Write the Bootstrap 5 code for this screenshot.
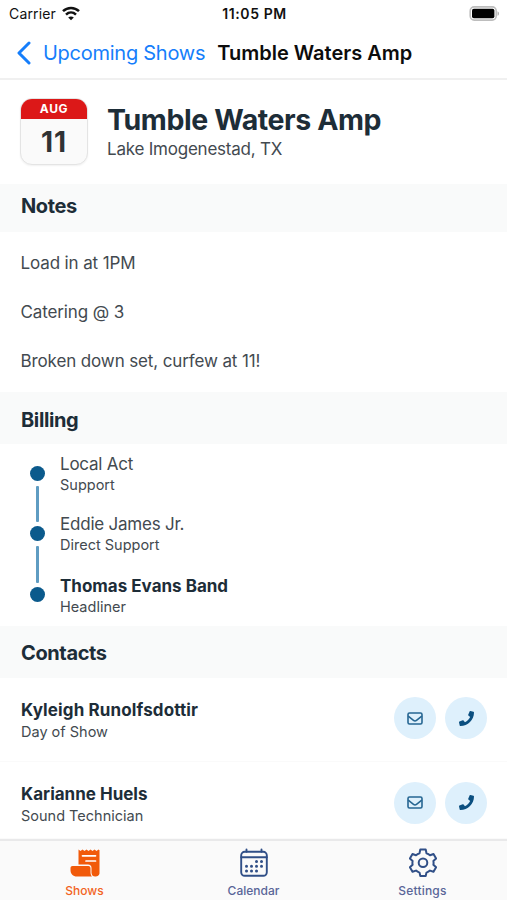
<!DOCTYPE html>
<html lang="en">
<head>
<meta charset="utf-8">
<meta name="viewport" content="width=device-width, initial-scale=1">
<title>Tumble Waters Amp</title>
<link href="https://cdn.jsdelivr.net/npm/bootstrap@5.3.0/dist/css/bootstrap.min.css" rel="stylesheet">
<style>
body{font-family:Inter,"Liberation Sans",sans-serif;color:#434a50;background:#fff;height:900px;overflow:hidden}
.screen{width:507px;height:900px}
.t{white-space:nowrap;display:block}
.status{height:27px;padding:0 7px 0 9px;color:#111;font-size:14px}
.status .side{flex:1 1 0}
.carrier{letter-spacing:.15px;margin-right:6px}
.clock{font-weight:600;font-size:14px;letter-spacing:.6px}
.topnav{height:53px;border-bottom:2px solid #f0f0f0;padding-left:16px}
.back{color:#157efb;font-size:20px;letter-spacing:-.26px;text-decoration:none}
.back svg{margin-right:11px}
.navttl{color:#0c0c0c;font-weight:600;font-size:20px;margin-left:12px}
.event{height:104px;padding:18px 0 0 20px}
.datebox{width:68px;height:67px;border-radius:12px;border:1px solid #e4e4e4;background:#fafafa;box-shadow:0 1px 2px rgba(0,0,0,.06);overflow:hidden}
.mon{height:21px;margin:-1px -1px 0;background:#dc1818;color:#fff;font-size:12px;font-weight:700;line-height:21px;letter-spacing:.6px}
.daynum{font-size:28px;font-weight:700;line-height:46px;color:#303234;letter-spacing:1px}
.einfo{margin:5px 0 0 19px}
.ename{font-size:28.5px;font-weight:700;line-height:34px;color:#1d2d38;letter-spacing:-.42px}
.sect{background:#f9fafa;color:#1d2d38;font-weight:700;font-size:20px;padding:15px 0 0 21px;line-height:24px;letter-spacing:-.38px;height:52px}
.sect-notes{height:48px;padding-top:10px}
.sect-billing{padding-top:16px}
.note{font-size:17px;line-height:24px;margin-bottom:25px;letter-spacing:-.12px}
.notes{height:160px;padding:19px 0 0 20.5px}
.bill{height:182px;padding:8px 0 0 30px}
.rail{width:15px;margin-right:15px;padding-top:14px}
.dot{width:15px;height:15px;border-radius:50%;background:#0b5a8c}
.seg{width:2.5px;height:36px;margin:5px 0 4px;background:#5f9cc2;border-radius:1px}
.seg-b{height:37px}
.act{height:60px}
.nm{font-size:17px;line-height:24px;letter-spacing:-.22px}
.rl{font-size:14.5px;line-height:18px}
.bill .act-top{padding-top:2px}
.strong{font-weight:700;color:#1d2d38;letter-spacing:0}
.contact{height:84px;padding:0 20px 3px 21px;border-bottom:1px solid #fafafa}
.contact .nm{letter-spacing:.13px;margin-top:1px}
.contact .rl{position:relative;top:1px}
.contact-last{height:77px;padding-bottom:0;padding-top:5px}
.contact-last .nm{letter-spacing:0}
.round{width:42px;height:42px;border-radius:50%;background:#def0fc;border:0;padding:0}
.round+.round{margin-left:9px}
.tabs{height:61px;border-top:2px solid #e9e9ea;background:#fafafa;color:#596598}
.tab{font-size:12px;line-height:14px;font-weight:500;padding-top:7px}
.tab svg{margin-bottom:7px}
.wide{letter-spacing:.2px}
.on{color:#f26322}
</style>
</head>
<body>
<div class="screen d-flex flex-column">
  <div class="status d-flex align-items-center flex-shrink-0">
    <div class="side d-flex align-items-center"><span class="t carrier">Carrier</span>
      <svg width="18" height="15" viewBox="0 0 18 15" fill="none" stroke="#111" stroke-width="2.500"><path d="M1 5.200C5.500.8 12.500.8 17 5.200"/><path d="M4 8.600c2.900-2.800 7.100-2.800 10 0"/><path d="M9 14.300 6.200 11.500c1.600-1.500 4-1.500 5.600 0z" fill="#111" stroke="none"/></svg>
    </div>
    <span class="t clock">11:05 PM</span>
    <div class="side d-flex justify-content-end">
      <svg width="31" height="15" viewBox="0 0 31 15"><rect x="1.200" y=".9" width="26" height="13.200" rx="4" fill="#fff" stroke="#bdbdbd" stroke-width="1.600"/><rect x="3" y="2.700" width="22.400" height="9.600" rx="1.800" fill="#000"/><path d="M28.500 5.200c2 .8 2 3.800 0 4.600z" fill="#b0b0b0"/></svg>
    </div>
  </div>
  <nav class="topnav d-flex align-items-center flex-shrink-0">
    <a class="back d-flex align-items-center" href="#"><svg width="16" height="24" viewBox="0 0 16 24" fill="none" stroke="#157efb" stroke-width="3" stroke-linecap="round" stroke-linejoin="round"><path d="M13 2 3 12l10 10"/></svg><span class="t">Upcoming Shows</span></a>
    <span class="t navttl">Tumble Waters Amp</span>
  </nav>
  <header class="event d-flex flex-shrink-0">
    <div class="datebox text-center"><div class="mon">AUG</div><div class="daynum">11</div></div>
    <div class="einfo"><span class="t ename">Tumble Waters Amp</span><span class="t nm">Lake Imogenestad, TX</span></div>
  </header>
  <h2 class="sect sect-notes mb-0 flex-shrink-0">Notes</h2>
  <section class="notes flex-shrink-0">
    <p class="note">Load in at 1PM</p><p class="note">Catering @ 3</p><p class="note mb-0">Broken down set, curfew at 11!</p>
  </section>
  <h2 class="sect sect-billing mb-0 flex-shrink-0">Billing</h2>
  <section class="bill d-flex flex-shrink-0">
    <div class="rail d-flex flex-column align-items-center">
      <i class="dot"></i><i class="seg"></i><i class="dot"></i><i class="seg seg-b"></i><i class="dot"></i>
    </div>
    <div>
      <div class="act"><span class="t nm">Local Act</span><span class="t rl">Support</span></div>
      <div class="act"><span class="t nm">Eddie James Jr.</span><span class="t rl">Direct Support</span></div>
      <div class="act-top"><span class="t nm strong">Thomas Evans Band</span><span class="t rl">Headliner</span></div>
    </div>
  </section>
  <h2 class="sect mb-0 flex-shrink-0">Contacts</h2>
  <div class="contact d-flex align-items-center flex-shrink-0">
    <div class="me-auto"><span class="t nm strong">Kyleigh Runolfsdottir</span><span class="t rl">Day of Show</span></div>
    <button class="round d-flex align-items-center justify-content-center" aria-label="Email"><svg width="16" height="13" viewBox="0 0 16 13" fill="none" stroke="#266692" stroke-width="1.600"><rect x="1" y="1" width="14" height="11" rx="1.500"/><path d="m1.200 4.200 5.300 4.200c1 .8 2 .8 3 0l5.300-4.200"/></svg></button>
    <button class="round d-flex align-items-center justify-content-center" aria-label="Call"><svg width="15" height="15" viewBox="0 0 512 512" fill="#0b4f80"><path d="M493.400 24.600l-104-24c-11.300-2.600-22.900 3.300-27.500 13.900l-48 112c-4.200 9.800-1.400 21.300 6.900 28l60.600 49.600c-36 76.700-98.900 140.500-177.200 177.200l-49.600-60.600c-6.800-8.300-18.200-11.100-28-6.900l-112 48C3.900 366.500-2 378.100.6 389.400l24 104C27.100 504.200 36.700 512 48 512c256.100 0 464-207.500 464-464 0-11.200-7.700-20.900-18.600-23.400z"/></svg></button>
  </div>
  <div class="contact contact-last d-flex align-items-center flex-shrink-0">
    <div class="me-auto"><span class="t nm strong">Karianne Huels</span><span class="t rl">Sound Technician</span></div>
    <button class="round d-flex align-items-center justify-content-center" aria-label="Email"><svg width="16" height="13" viewBox="0 0 16 13" fill="none" stroke="#266692" stroke-width="1.600"><rect x="1" y="1" width="14" height="11" rx="1.500"/><path d="m1.200 4.200 5.300 4.200c1 .8 2 .8 3 0l5.300-4.200"/></svg></button>
    <button class="round d-flex align-items-center justify-content-center" aria-label="Call"><svg width="15" height="15" viewBox="0 0 512 512" fill="#0b4f80"><path d="M493.400 24.600l-104-24c-11.300-2.600-22.900 3.300-27.500 13.900l-48 112c-4.200 9.800-1.400 21.300 6.900 28l60.600 49.600c-36 76.700-98.900 140.500-177.200 177.200l-49.600-60.600c-6.800-8.300-18.200-11.100-28-6.900l-112 48C3.900 366.500-2 378.100.6 389.400l24 104C27.100 504.200 36.700 512 48 512c256.100 0 464-207.500 464-464 0-11.200-7.700-20.900-18.600-23.400z"/></svg></button>
  </div>
  <nav class="tabs row g-0 flex-shrink-0 text-center">
    <div class="col tab on d-flex flex-column align-items-center"><svg width="30" height="29" viewBox="0 0 30 29" fill="#f15a0a"><path d="M8.500 1.500l2 1.500 2-1.500 2 1.500 2-1.500 2 1.500 2-1.500 2 1.500 2-1.500 2 1.500 2-1.500 1 .8V24a4 4 0 0 1-8 1V20a3.500 3.500 0 0 0-3.500-3.500H8.500z"/><path d="M2.500 18h16c1.300 0 2 1 2 2.300V24c0 2 .6 3.500 1.500 4.500H7C3 28.500.5 26 .5 22v-2c0-1.200.8-2 2-2z"/><path d="M12.500 7.800h13M16 13h9.500" stroke="#fff" stroke-width="1.700" stroke-linecap="round"/></svg><span>Shows</span></div>
    <div class="col tab d-flex flex-column align-items-center"><svg width="28" height="29" viewBox="0 0 28 29" fill="none" stroke="#304f87" stroke-width="1.900" stroke-linecap="round"><rect x="1.200" y="3.800" width="25.600" height="24" rx="3.500"/><path d="M1.200 9.200h25.600M6.500 1.500v2.300M21.500 1.500v2.300"/><path d="M16.500 13.500h.01M21.500 13.500h.01M6.500 18.300h.01M11.500 18.300h.01M16.500 18.300h.01M21.500 18.300h.01M6.500 23h.01M11.500 23h.01M16.500 23h.01" stroke-width="3"/></svg><span>Calendar</span></div>
    <div class="col tab d-flex flex-column align-items-center"><svg width="28" height="29" viewBox="0 0 28 29" fill="none" stroke="#304f87" stroke-width="2" stroke-linejoin="round"><path d="M11.300 1.500h5.400l.8 3.700a10 10 0 0 1 3.500 2l3.500-1.200 2.600 4.500-2.700 2.500a10 10 0 0 1 0 3.800l2.700 2.500-2.600 4.500-3.500-1.200a10 10 0 0 1-3.500 2l-.8 3.400h-5.400l-.8-3.400a10 10 0 0 1-3.500-2l-3.500 1.200-2.600-4.500 2.700-2.500a10 10 0 0 1 0-3.800L.9 10.500 3.500 6 7 7.200a10 10 0 0 1 3.500-2z"/><circle cx="14" cy="14.700" r="4.300"/></svg><span class="wide">Settings</span></div>
  </nav>
</div>
<script src="https://cdn.jsdelivr.net/npm/bootstrap@5.3.0/dist/js/bootstrap.bundle.min.js"></script>
</body>
</html>
